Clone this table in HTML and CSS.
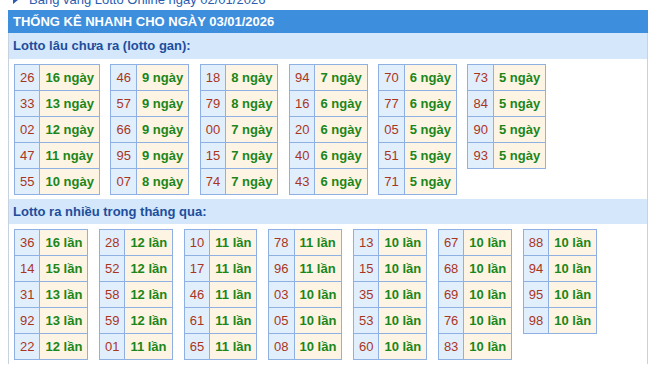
FILE: index.html
```html
<!DOCTYPE html>
<html lang="vi">
<head>
<meta charset="utf-8">
<title>Thống kê nhanh</title>
<link rel="stylesheet" href="styles.css">
</head>
<body>
<div class="top-link"><span class="arrow"></span><a href="#">Bảng vàng Lotto Online ngày 02/01/2026</a></div>
<div class="box">
  <div class="box-title">THỐNG KÊ NHANH CHO NGÀY 03/01/2026</div>
  <div class="box-body">
    <div class="sec-title">Lotto lâu chưa ra (lotto gan):</div>
    <div class="tables">
      <table><tr><td class="n">26</td><td class="v">16 ngày</td></tr><tr><td class="n">33</td><td class="v">13 ngày</td></tr><tr><td class="n">02</td><td class="v">12 ngày</td></tr><tr><td class="n">47</td><td class="v">11 ngày</td></tr><tr><td class="n">55</td><td class="v">10 ngày</td></tr></table>
      <table><tr><td class="n">46</td><td class="v">9 ngày</td></tr><tr><td class="n">57</td><td class="v">9 ngày</td></tr><tr><td class="n">66</td><td class="v">9 ngày</td></tr><tr><td class="n">95</td><td class="v">9 ngày</td></tr><tr><td class="n">07</td><td class="v">8 ngày</td></tr></table>
      <table><tr><td class="n">18</td><td class="v">8 ngày</td></tr><tr><td class="n">79</td><td class="v">8 ngày</td></tr><tr><td class="n">00</td><td class="v">7 ngày</td></tr><tr><td class="n">15</td><td class="v">7 ngày</td></tr><tr><td class="n">74</td><td class="v">7 ngày</td></tr></table>
      <table><tr><td class="n">94</td><td class="v">7 ngày</td></tr><tr><td class="n">16</td><td class="v">6 ngày</td></tr><tr><td class="n">20</td><td class="v">6 ngày</td></tr><tr><td class="n">40</td><td class="v">6 ngày</td></tr><tr><td class="n">43</td><td class="v">6 ngày</td></tr></table>
      <table><tr><td class="n">70</td><td class="v">6 ngày</td></tr><tr><td class="n">77</td><td class="v">6 ngày</td></tr><tr><td class="n">05</td><td class="v">5 ngày</td></tr><tr><td class="n">51</td><td class="v">5 ngày</td></tr><tr><td class="n">71</td><td class="v">5 ngày</td></tr></table>
      <table><tr><td class="n">73</td><td class="v">5 ngày</td></tr><tr><td class="n">84</td><td class="v">5 ngày</td></tr><tr><td class="n">90</td><td class="v">5 ngày</td></tr><tr><td class="n">93</td><td class="v">5 ngày</td></tr></table>
    </div>
    <div class="sec-title">Lotto ra nhiều trong tháng qua:</div>
    <div class="tables">
      <table><tr><td class="n">36</td><td class="v">16 lần</td></tr><tr><td class="n">14</td><td class="v">15 lần</td></tr><tr><td class="n">31</td><td class="v">13 lần</td></tr><tr><td class="n">92</td><td class="v">13 lần</td></tr><tr><td class="n">22</td><td class="v">12 lần</td></tr></table>
      <table><tr><td class="n">28</td><td class="v">12 lần</td></tr><tr><td class="n">52</td><td class="v">12 lần</td></tr><tr><td class="n">58</td><td class="v">12 lần</td></tr><tr><td class="n">59</td><td class="v">12 lần</td></tr><tr><td class="n">01</td><td class="v">11 lần</td></tr></table>
      <table><tr><td class="n">10</td><td class="v">11 lần</td></tr><tr><td class="n">17</td><td class="v">11 lần</td></tr><tr><td class="n">46</td><td class="v">11 lần</td></tr><tr><td class="n">61</td><td class="v">11 lần</td></tr><tr><td class="n">65</td><td class="v">11 lần</td></tr></table>
      <table><tr><td class="n">78</td><td class="v">11 lần</td></tr><tr><td class="n">96</td><td class="v">11 lần</td></tr><tr><td class="n">03</td><td class="v">10 lần</td></tr><tr><td class="n">05</td><td class="v">10 lần</td></tr><tr><td class="n">08</td><td class="v">10 lần</td></tr></table>
      <table><tr><td class="n">13</td><td class="v">10 lần</td></tr><tr><td class="n">15</td><td class="v">10 lần</td></tr><tr><td class="n">35</td><td class="v">10 lần</td></tr><tr><td class="n">53</td><td class="v">10 lần</td></tr><tr><td class="n">60</td><td class="v">10 lần</td></tr></table>
      <table><tr><td class="n">67</td><td class="v">10 lần</td></tr><tr><td class="n">68</td><td class="v">10 lần</td></tr><tr><td class="n">69</td><td class="v">10 lần</td></tr><tr><td class="n">76</td><td class="v">10 lần</td></tr><tr><td class="n">83</td><td class="v">10 lần</td></tr></table>
      <table><tr><td class="n">88</td><td class="v">10 lần</td></tr><tr><td class="n">94</td><td class="v">10 lần</td></tr><tr><td class="n">95</td><td class="v">10 lần</td></tr><tr><td class="n">98</td><td class="v">10 lần</td></tr></table>
    </div>
  </div>
</div>
</body>
</html>
```
FILE: styles.css
```css
html, body {
  margin: 0;
  padding: 0;
  background: #ffffff;
}
body {
  font-family: "Liberation Sans", Arial, sans-serif;
  font-size: 13px;
}
.top-link {
  margin: -8px 8px 3px 8px;
  height: 15px;
  line-height: 15px;
  display: flex;
  align-items: center;
}
.top-link .arrow {
  width: 0;
  height: 0;
  border-top: 4px solid transparent;
  border-bottom: 4px solid transparent;
  border-left: 5px solid #2a5db0;
  margin: 0 11px 0 5px;
}
.top-link a {
  color: #2a5db0;
  text-decoration: none;
}
.box {
  width: 640px;
  margin: 0 8px;
}
.box-title {
  height: 23px;
  line-height: 23px;
  background: #3d8edc;
  color: #ffffff;
  font-weight: bold;
  padding-left: 5px;
}
.box-body {
  border-left: 1px solid #c6d2e0;
  border-right: 1px solid #c6d2e0;
}
.sec-title {
  height: 26px;
  line-height: 26px;
  background: #d5e7fb;
  color: #1d4e9c;
  font-weight: bold;
  padding-left: 4px;
}
.sec-title + .tables + .sec-title {
  height: 25px;
  line-height: 25px;
}
.tables {
  display: flex;
  align-items: flex-start;
  gap: 10.6px;
  padding: 5px 5px 4px 5px;
}
table {
  border-collapse: collapse;
}
td {
  border: 1px solid #8fb0e3;
  height: 26px;
  padding: 0 5px;
  line-height: 15px;
  white-space: nowrap;
  box-sizing: border-box;
}
td.n {
  background: #e1eefc;
  color: #a8361f;
  font-size: 13px;
  text-align: center;
}
td.v {
  background: #fef4e3;
  color: #1b861b;
  font-size: 13px;
  font-weight: bold;
}
```
